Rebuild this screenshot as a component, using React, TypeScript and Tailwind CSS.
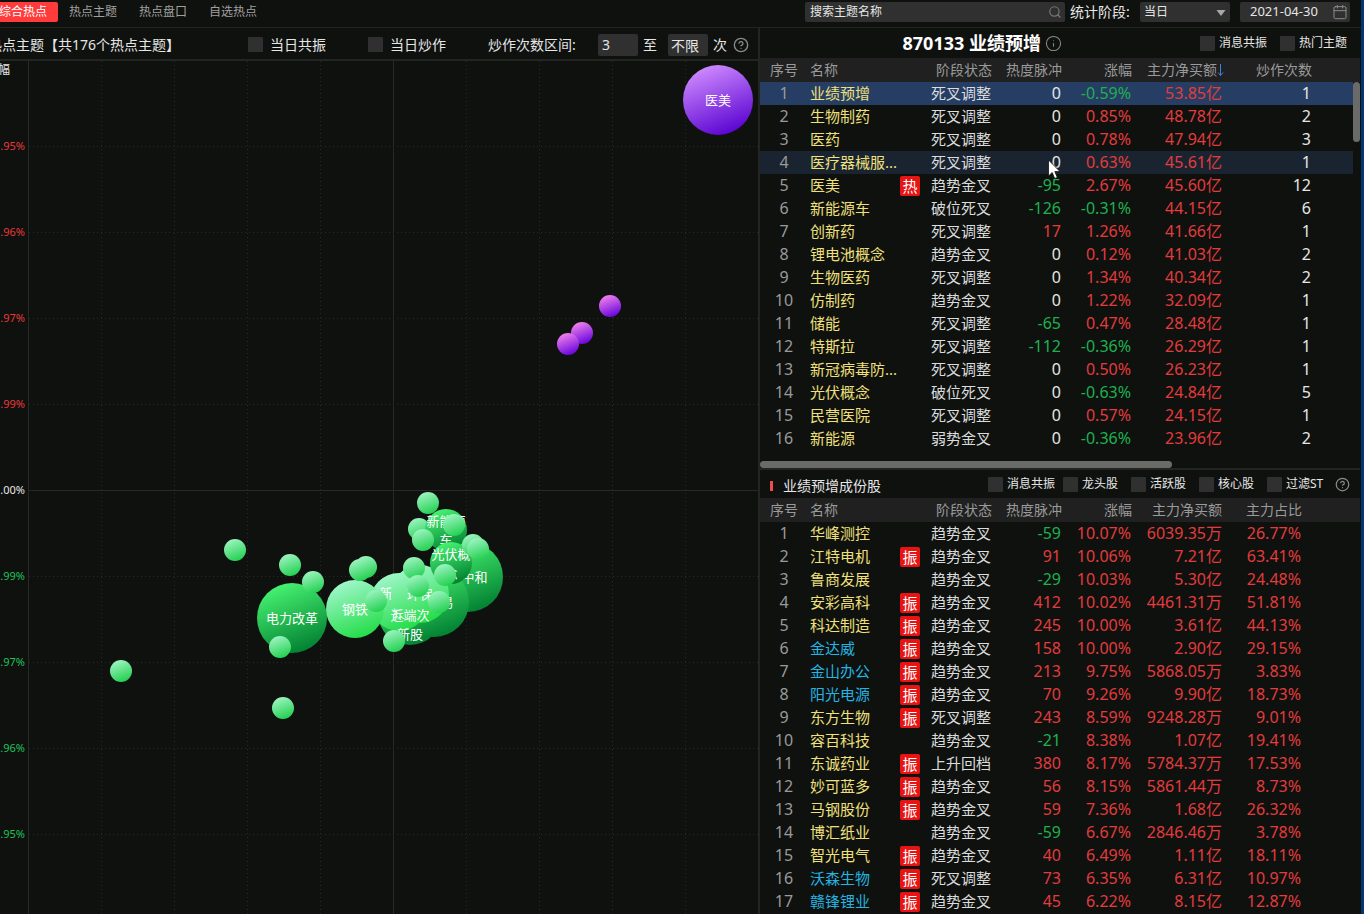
import { Search, Calendar, CircleHelp, Info } from "lucide-react";

type Theme = [name: string, state: string, pulse: string, pct: string, net: string, count: string, tag?: string];

const tabs = ["综合热点", "热点主题", "热点盘口", "自选热点"];

const themes: Theme[] = [
  ["业绩预增", "死叉调整", "0", "-0.59%", "53.85亿", "1"],
  ["生物制药", "死叉调整", "0", "0.85%", "48.78亿", "2"],
  ["医药", "死叉调整", "0", "0.78%", "47.94亿", "3"],
  ["医疗器械服...", "死叉调整", "0", "0.63%", "45.61亿", "1"],
  ["医美", "趋势金叉", "-95", "2.67%", "45.60亿", "12", "热"],
  ["新能源车", "破位死叉", "-126", "-0.31%", "44.15亿", "6"],
  ["创新药", "死叉调整", "17", "1.26%", "41.66亿", "1"],
  ["锂电池概念", "趋势金叉", "0", "0.12%", "41.03亿", "2"],
  ["生物医药", "死叉调整", "0", "1.34%", "40.34亿", "2"],
  ["仿制药", "趋势金叉", "0", "1.22%", "32.09亿", "1"],
  ["储能", "死叉调整", "-65", "0.47%", "28.48亿", "1"],
  ["特斯拉", "死叉调整", "-112", "-0.36%", "26.29亿", "1"],
  ["新冠病毒防...", "死叉调整", "0", "0.50%", "26.23亿", "1"],
  ["光伏概念", "破位死叉", "0", "-0.63%", "24.84亿", "5"],
  ["民营医院", "死叉调整", "0", "0.57%", "24.15亿", "1"],
  ["新能源", "弱势金叉", "0", "-0.36%", "23.96亿", "2"],
];

const stocks: Theme[] = [
  ["华峰测控", "趋势金叉", "-59", "10.07%", "6039.35万", "26.77%"],
  ["江特电机", "趋势金叉", "91", "10.06%", "7.21亿", "63.41%", "振"],
  ["鲁商发展", "趋势金叉", "-29", "10.03%", "5.30亿", "24.48%"],
  ["安彩高科", "趋势金叉", "412", "10.02%", "4461.31万", "51.81%", "振"],
  ["科达制造", "趋势金叉", "245", "10.00%", "3.61亿", "44.13%", "振"],
  ["金达威", "趋势金叉", "158", "10.00%", "2.90亿", "29.15%", "振"],
  ["金山办公", "趋势金叉", "213", "9.75%", "5868.05万", "3.83%", "振"],
  ["阳光电源", "趋势金叉", "70", "9.26%", "9.90亿", "18.73%", "振"],
  ["东方生物", "死叉调整", "243", "8.59%", "9248.28万", "9.01%", "振"],
  ["容百科技", "趋势金叉", "-21", "8.38%", "1.07亿", "19.41%"],
  ["东诚药业", "上升回档", "380", "8.17%", "5784.37万", "17.53%", "振"],
  ["妙可蓝多", "趋势金叉", "56", "8.15%", "5861.44万", "8.73%", "振"],
  ["马钢股份", "趋势金叉", "59", "7.36%", "1.68亿", "26.32%", "振"],
  ["博汇纸业", "趋势金叉", "-59", "6.67%", "2846.46万", "3.78%"],
  ["智光电气", "趋势金叉", "40", "6.49%", "1.11亿", "18.11%", "振"],
  ["沃森生物", "死叉调整", "73", "6.35%", "6.31亿", "10.97%", "振"],
  ["赣锋锂业", "趋势金叉", "45", "6.22%", "8.15亿", "12.87%", "振"],
];

const watched = ["金达威", "金山办公", "阳光电源", "沃森生物", "赣锋锂业"];

const ticks = [
  { y: 85, label: ".95%", fill: "#e8393a" },
  { y: 171, label: ".96%", fill: "#e8393a" },
  { y: 257, label: ".97%", fill: "#e8393a" },
  { y: 343, label: ".99%", fill: "#e8393a" },
  { y: 429, label: ".00%", fill: "#e6e6e6" },
  { y: 515, label: ".99%", fill: "#1fc25b" },
  { y: 601, label: ".97%", fill: "#1fc25b" },
  { y: 687, label: ".96%", fill: "#1fc25b" },
  { y: 773, label: ".95%", fill: "#1fc25b" },
];

const columns = [101, 174, 247, 320, 393, 466, 539, 612, 685];

type Bubble = { x: number; y: number; r: number; tone: string; lines?: string[] };

// painted in order, later ones lie on top
const bubbles: Bubble[] = [
  { x: 718, y: 39, r: 35, tone: "violet", lines: ["医美"] },
  { x: 610, y: 245, r: 11, tone: "pink" },
  { x: 582, y: 272, r: 11, tone: "pink" },
  { x: 568, y: 283, r: 11, tone: "pink" },
  { x: 292, y: 557, r: 35, tone: "green", lines: ["电力改革"] },
  { x: 468, y: 516, r: 35, tone: "green", lines: ["碳中和"] },
  { x: 434, y: 541, r: 35, tone: "green", lines: ["碳交易"] },
  { x: 410, y: 552, r: 32, tone: "green" },
  { x: 399, y: 541, r: 29, tone: "mint", lines: ["新材料", "线"] },
  { x: 420, y: 533, r: 29, tone: "mint", lines: ["环保"] },
  { x: 410, y: 563, r: 20, tone: "clear", lines: ["近端次", "新股"] },
  { x: 355, y: 548, r: 29, tone: "mint", lines: ["钢铁"] },
  { x: 419, y: 468, r: 11, tone: "small" },
  { x: 446, y: 469, r: 21, tone: "green", lines: ["新能源", "车"] },
  { x: 451, y: 502, r: 21, tone: "green", lines: ["光伏概", "念"] },
  { x: 428, y: 442, r: 11, tone: "small" },
  { x: 423, y: 479, r: 11, tone: "small" },
  { x: 454, y: 464, r: 11, tone: "small" },
  { x: 473, y: 484, r: 11, tone: "small" },
  { x: 478, y: 488, r: 11, tone: "small" },
  { x: 414, y: 507, r: 11, tone: "small" },
  { x: 445, y: 514, r: 11, tone: "small" },
  { x: 418, y: 525, r: 11, tone: "small" },
  { x: 439, y: 541, r: 11, tone: "small" },
  { x: 376, y: 540, r: 11, tone: "small" },
  { x: 394, y: 580, r: 11, tone: "small" },
  { x: 366, y: 506, r: 11, tone: "small" },
  { x: 360, y: 509, r: 11, tone: "small" },
  { x: 290, y: 504, r: 11, tone: "small" },
  { x: 313, y: 521, r: 11, tone: "small" },
  { x: 280, y: 586, r: 11, tone: "small" },
  { x: 283, y: 647, r: 11, tone: "small" },
  { x: 235, y: 489, r: 11, tone: "small" },
  { x: 121, y: 610, r: 11, tone: "small" },
];

const tones = [
  { id: "violet", from: "#cf8cff", to: "#5800d0" },
  { id: "pink", from: "#f384ec", to: "#6400dc" },
  { id: "green", from: "#48f572", to: "#007d30" },
  { id: "mint", from: "#a4f7cd", to: "#1fdc44" },
  { id: "small", from: "#a0f5c4", to: "#1fcf4c" },
];

function signColor(value: string) {
  if (value === "0") return "text-[#e6e6e6]";
  return value.startsWith("-") ? "text-[#1eb04f]" : "text-[#e23c3c]";
}

function Check({ label, className = "text-xs gap-1" }: { label: string; className?: string }) {
  return (
    <label className={`flex items-center whitespace-nowrap text-[#e6e6e6] ${className}`}>
      <input type="checkbox" className="size-[15px] shrink-0 appearance-none rounded-[1px] bg-[#2f302f] checked:bg-[#ff3b3b]" />
      {label}
    </label>
  );
}

function BubbleChart() {
  return (
    <svg className="absolute inset-0 size-full" role="img" aria-label="热点主题气泡图">
      <defs>
        {tones.map((t) => (
          <linearGradient key={t.id} id={t.id} x1="0.3" y1="0" x2="0.7" y2="1">
            <stop offset="0" stopColor={t.from} />
            <stop offset="1" stopColor={t.to} />
          </linearGradient>
        ))}
      </defs>

      <g stroke="#262926" strokeDasharray="1 3">
        {ticks.map((t) => (
          <line key={t.y} x1="29" x2="100%" y1={t.y + 0.5} y2={t.y + 0.5} strokeDasharray={t.y === 429 ? "none" : undefined} />
        ))}
        {columns.map((x) => (
          <line key={x} x1={x + 0.5} x2={x + 0.5} y1="0" y2="100%" strokeDasharray={x === 393 ? "none" : undefined} />
        ))}
      </g>
      <line x1="28.5" x2="28.5" y1="0" y2="100%" stroke="#272927" />

      <text x="10" y="13" textAnchor="end" fontSize="12" fill="#e6e6e6">幅</text>
      {ticks.map((t) => (
        <text key={t.y} x="25" y={t.y + 4} textAnchor="end" fontSize="11" fill={t.fill}>
          {t.label}
        </text>
      ))}

      {bubbles.map((b, i) => (
        <g key={i}>
          {b.tone !== "clear" && <circle cx={b.x} cy={b.y} r={b.r} fill={`url(#${b.tone})`} />}
          {b.lines?.map((line, n) => (
            <text
              key={line}
              x={b.x}
              y={b.y + 5 + n * 19 - (b.lines!.length - 1) * 9}
              textAnchor="middle"
              fontSize="13"
              fill="#fff"
            >
              {line}
            </text>
          ))}
        </g>
      ))}
    </svg>
  );
}

function DataTable({ rows, last, sorted }: { rows: Theme[]; last: string; sorted?: boolean }) {
  return (
    <table className="w-full table-fixed border-collapse whitespace-nowrap">
      <colgroup>
        <col className="w-12" />
        <col className="w-[92px]" />
        <col className="w-5" />
        <col className="w-[72px]" />
        <col className="w-[70px]" />
        <col className="w-[70px]" />
        <col className="w-[90px]" />
        <col className={sorted ? "w-[90px]" : "w-20"} />
        <col />
        <col className="w-[7px]" />
      </colgroup>
      <thead className="bg-[#1f201f]">
        <tr className="h-6 text-right text-sm leading-6 text-[#9a9a9a] *:font-normal">
          <th scope="col" className="text-center">序号</th>
          <th scope="col" colSpan={2} className="pl-0.5 text-left">名称</th>
          <th scope="col">阶段状态</th>
          <th scope="col">热度脉冲</th>
          <th scope="col">涨幅</th>
          <th scope="col">
            <span className="flex items-center justify-end">
              主力净买额
              {sorted && (
                <svg width="7" height="14" viewBox="0 0 7 14" fill="none" stroke="#3b82e0" className="-mr-0.5 shrink-0">
                  <path d="M3.500 1v11.500M1 9.500l2.500 3 2.500-3" />
                </svg>
              )}
            </span>
          </th>
          <th scope="col">{last}</th>
          <td colSpan={2} />
        </tr>
      </thead>
      <tbody>
        {rows.map(([name, state, pulse, pct, net, extra, tag], i) => (
          <tr
            key={name}
            className={`h-[23px] text-right text-base leading-[23px] ${
              sorted && i === 0 ? "bg-[#263e64]" : sorted && i === 3 ? "bg-[#1a2431]" : ""
            }`}
          >
            <td className="text-center text-[#9a9a9a]">{i + 1}</td>
            <td className={`pl-0.5 text-left text-[15px] ${watched.includes(name) ? "text-[#25b4e0]" : "text-[#f0e07c]"}`}>{name}</td>
            <td>
              {tag && (
                <span className="block size-5 rounded-[2px] bg-[#e81414] text-center text-[15px] leading-5 text-white">{tag}</span>
              )}
            </td>
            <td className="pr-px text-[15px] text-[#dcdcdc]">{state}</td>
            <td className={`pr-px ${signColor(pulse)}`}>{pulse}</td>
            <td className={`pr-px ${signColor(pct)}`}>{pct}</td>
            <td className="text-[#e23c3c]">{net}</td>
            <td className={sorted ? "pr-px text-[#e6e6e6]" : "pr-px text-[#e23c3c]"}>{extra}</td>
            <td />
            <td className="bg-[#0f110f]" />
          </tr>
        ))}
      </tbody>
    </table>
  );
}

export default function App() {
  return (
    <div className="flex min-h-screen flex-col overflow-hidden border-r-[3px] border-[#06366f] bg-[#0f110f] font-['Noto_Sans','Noto_Sans_CJK_SC',sans-serif] text-[#e6e6e6]">
      {/* Top bar */}
      <header className="flex h-7 items-start justify-between border-b border-[#232523] pt-0.5 pr-[11px]">
        <nav className="-ml-3 flex">
          {tabs.map((tab, i) => (
            <button
              key={tab}
              className={`h-5 px-[11px] text-xs leading-5 ${i === 0 ? "rounded-[2px] bg-[#ff3b3b] text-white" : "text-[#a0a0a0]"}`}
            >
              {tab}
            </button>
          ))}
        </nav>
        <div className="flex items-center">
          <div className="flex h-5 w-[260px] items-center rounded-[2px] bg-[#2f302f] pr-[3px] pl-[5px]">
            <input
              aria-label="搜索主题名称"
              placeholder="搜索主题名称"
              className="min-w-0 flex-1 bg-transparent text-xs outline-none placeholder:text-[#e6e6e6]"
            />
            <Search size={14} color="#777" />
          </div>
          <label htmlFor="period" className="ml-[5px] w-[70px] text-sm leading-5">统计阶段:</label>
          <div className="relative">
            <select id="period" className="block h-5 w-[90px] appearance-none rounded-[2px] bg-[#2f302f] px-1 text-xs outline-none">
              <option>当日</option>
              <option>5日</option>
            </select>
            <svg className="pointer-events-none absolute top-2 right-1" width="10" height="6">
              <path d="M0.500 0h9L5 6z" fill="#a8a8a8" />
            </svg>
          </div>
          <div className="ml-2.5 flex h-5 w-[110px] items-center rounded-[2px] bg-[#2f302f] pr-0.5 pl-2.5">
            <input aria-label="日期" defaultValue="2021-04-30" className="min-w-0 flex-1 bg-transparent text-[13px] outline-none" />
            <Calendar size={16} strokeWidth={1.5} color="#8a8a8a" />
          </div>
        </div>
      </header>

      <main className="flex flex-1">
        {/* Bubble chart */}
        <section className="flex min-w-0 flex-1 flex-col border-r-2 border-[#232523]">
          <div className="flex h-[33px] items-center border-b-2 border-[#232523] pt-0.5 text-sm whitespace-nowrap">
            <h1 className="-ml-3 w-[260px]">热点主题【共176个热点主题】</h1>
            <Check label="当日共振" className="w-[120px] gap-[7px] text-sm" />
            <Check label="当日炒作" className="w-[120px] gap-[7px] text-sm" />
            <label htmlFor="from" className="w-[110px]">炒作次数区间:</label>
            <input id="from" defaultValue="3" className="h-[22px] w-10 rounded-[2px] bg-[#2f302f] px-1 outline-none" />
            <label htmlFor="to" className="w-[30px] pl-[5px]">至</label>
            <input id="to" defaultValue="不限" className="h-[22px] w-10 rounded-[2px] bg-[#2f302f] px-[3px] outline-none" />
            <span className="w-[25px] pl-[5px]">次</span>
            <CircleHelp size={16} strokeWidth={2} color="#8a8a8a" />
          </div>
          <div className="relative flex-1 overflow-hidden">
            <BubbleChart />
          </div>
        </section>

        <div className="w-[601px] shrink-0 pr-px">
          {/* Theme list */}
          <section className="relative border-b-2 border-[#232523]">
            <div className="flex h-[30px] items-center pr-[13px]">
              <h2 className="flex flex-1 items-center justify-end gap-1 text-lg font-bold text-white">
                870133 业绩预增
                <Info size={17} strokeWidth={1.5} color="#8a8a8a" />
              </h2>
              <div className="flex w-[285px] justify-end gap-[13px]">
                <Check label="消息共振" />
                <Check label="热门主题" />
              </div>
            </div>
            <DataTable rows={themes} last="炒作次数" sorted />
            <div className="mt-[11px] h-[7px] w-[412px] rounded-full bg-[#6a6b69]" />
            <div className="absolute top-[54px] right-0 h-[60px] w-[7px] rounded-full bg-[#6a6b69]" />
            <svg className="absolute top-[131px] left-[288px]" width="13" height="21" viewBox="0 0 13 21">
              <path d="M0.500 1v16l3.700-3.500 2.500 6 2.600-1.100-2.500-5.800h5.200z" fill="#fff" stroke="#111" strokeWidth="0.800" />
            </svg>
          </section>

          {/* Component stocks */}
          <section>
            <div className="flex h-7 items-center justify-between px-2.5">
              <h2 className="flex items-center gap-2.5 pt-1 text-sm">
                <span className="h-2.5 w-[3px] bg-[#e85050]" />
                业绩预增成份股
              </h2>
              <div className="flex items-center gap-2">
                {["消息共振", "龙头股", "活跃股", "核心股", "过滤ST"].map((name) => (
                  <Check key={name} label={name} className="min-w-15 gap-1 text-xs" />
                ))}
                <CircleHelp size={15} strokeWidth={2} color="#8a8a8a" />
              </div>
            </div>
            <DataTable rows={stocks} last="主力占比" />
          </section>
        </div>
      </main>
    </div>
  );
}
